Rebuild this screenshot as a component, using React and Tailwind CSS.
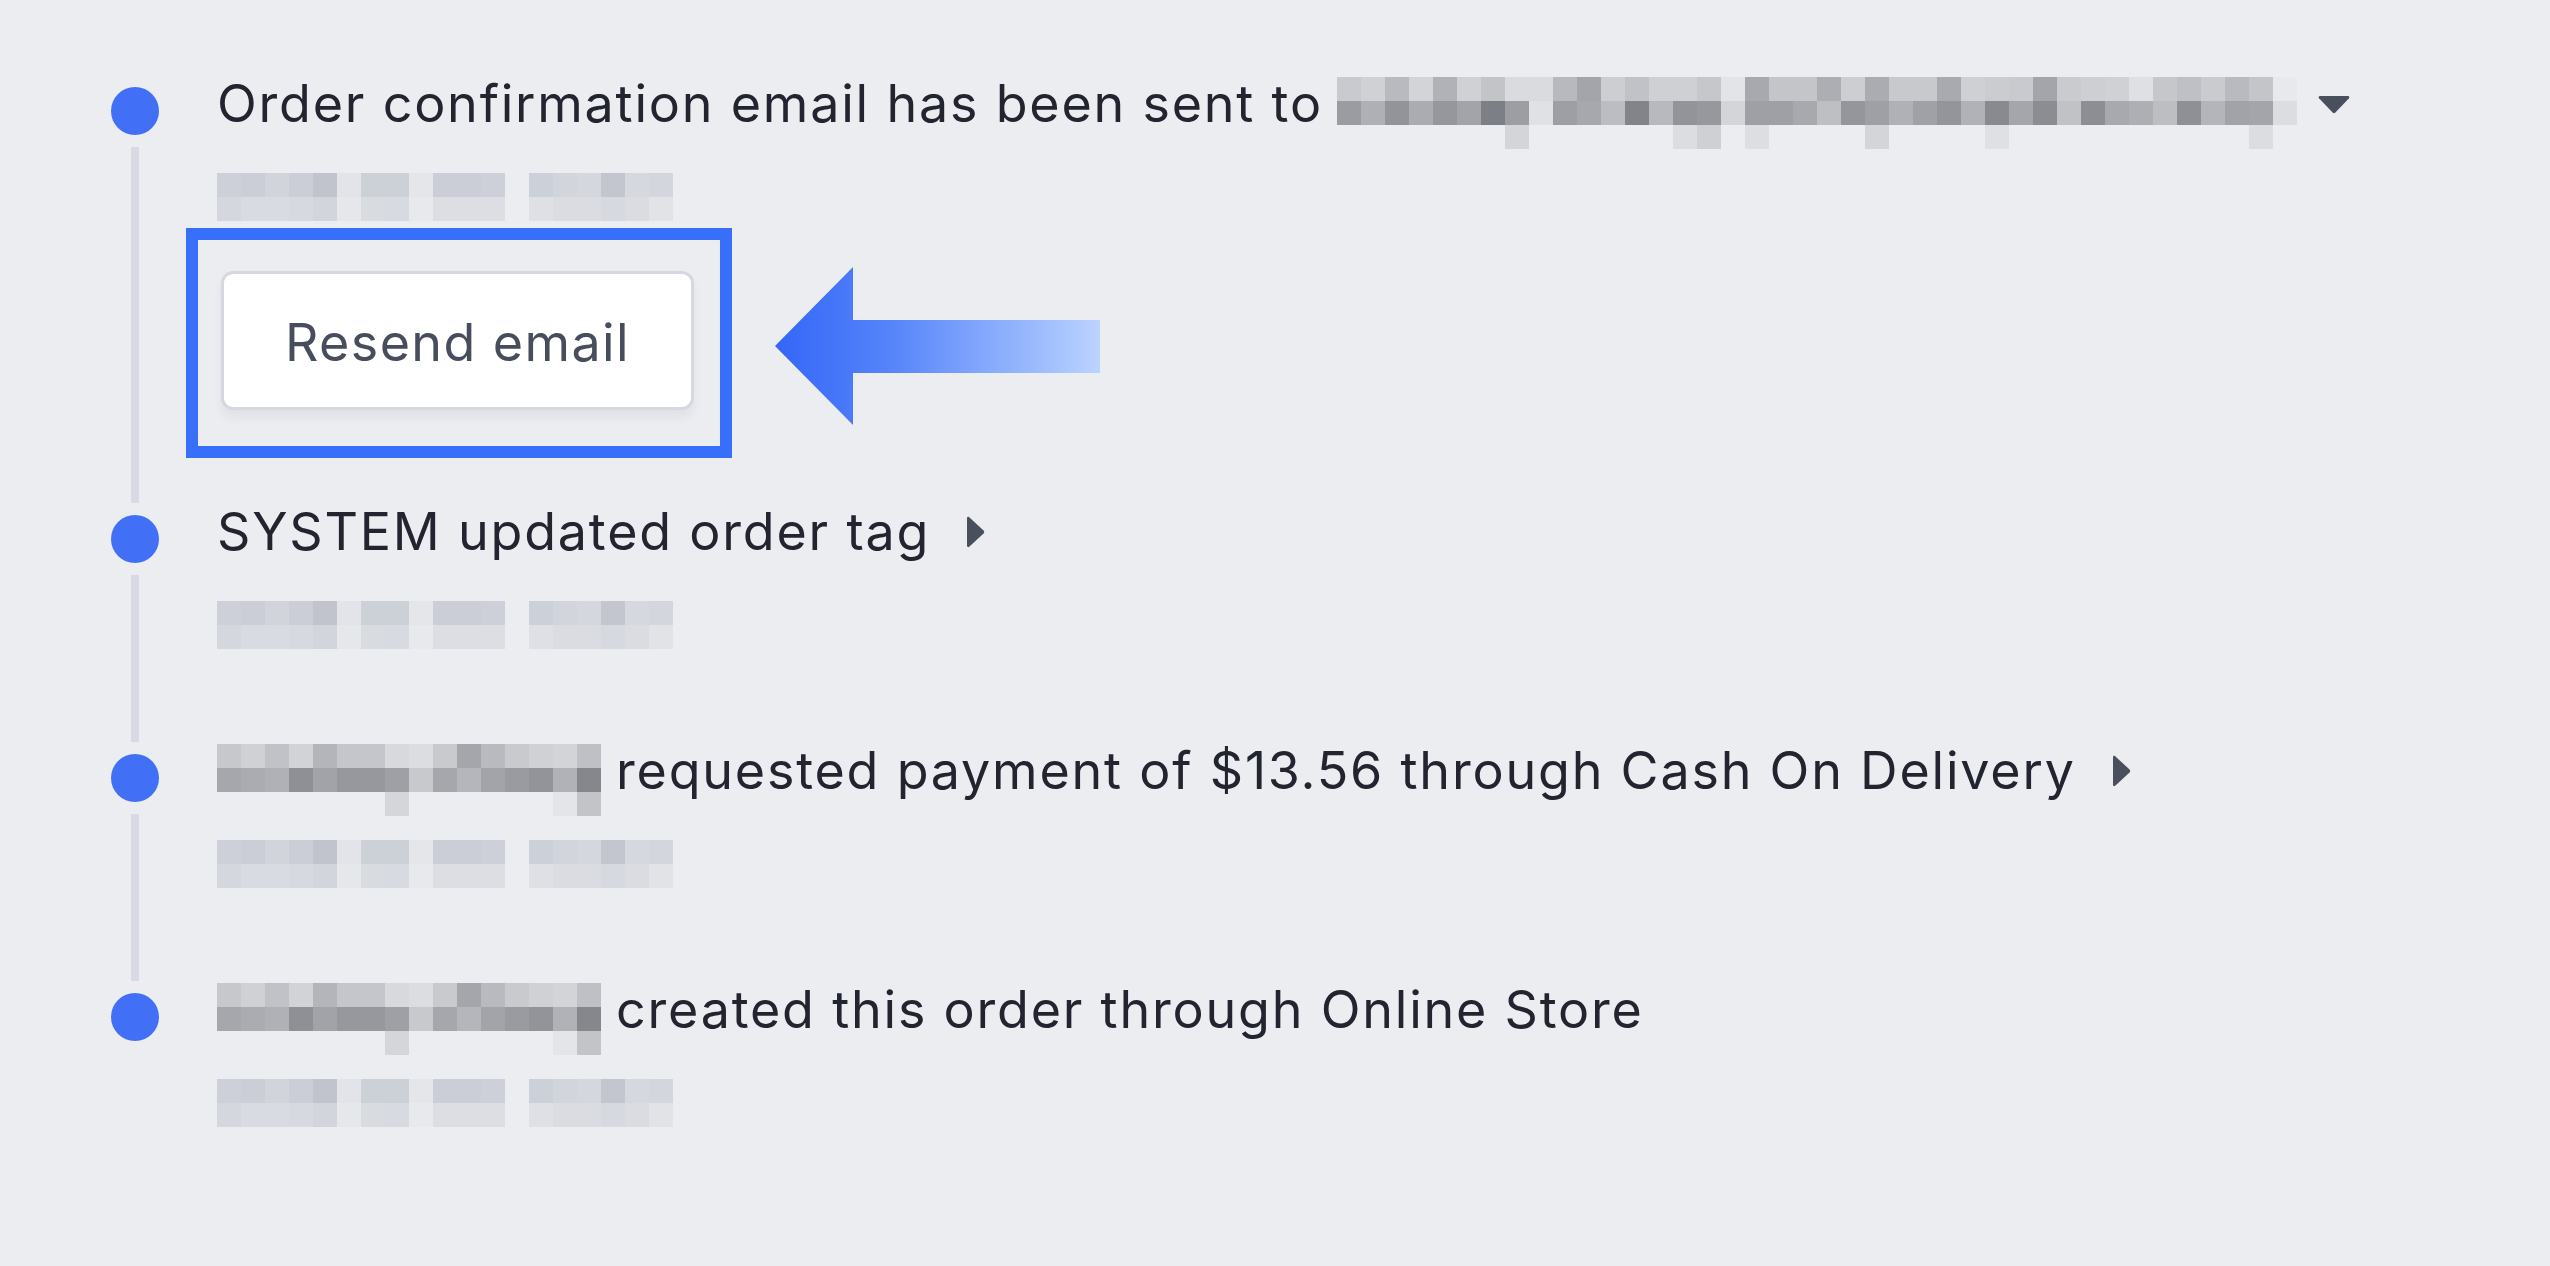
import { Fragment } from 'react'

// pixelated (redacted) blocks, colours read off the reference
const stampTop = ['#cdd0d8', '#cbced6', '#d1d4db', '#cbced6', '#c1c4cd', '#e2e4e9', '#ccd0d7', '#ccd0d7', '#e4e6ea', '#cbced6', '#cbced6', '#cdd0d8', null, '#ccd0d8', '#d2d5dc', '#d4d7dd', '#c3c6cf', '#d5d8de', '#d3d6dc']
const stampBottom = ['#d4d7dd', '#d8dbe1', '#d8dbe1', '#d6d9df', '#d2d5db', '#e6e7eb', '#d8dbe0', '#d7dae0', '#e8e9ec', '#dcdee3', '#dcdee3', '#dcdee3', null, '#dee0e5', '#dadce2', '#dadce2', '#d6d9df', '#dadce1', '#e2e3e7']

const nameTop = ['#c6c8cc', '#d0d1d5', '#c1c2c7', '#d2d3d7', '#b4b5ba', '#c5c6cb', '#c5c6cb', '#d8d9dd', '#dcdde1', '#c9cace', '#a5a6ab', '#b9babf', '#c9cace', '#d0d1d5', '#d3d4d8', '#bfc0c5']
const nameMid = ['#a6a7ad', '#abacb2', '#b0b1b6', '#8e9096', '#a2a3a9', '#97989e', '#97989e', '#9fa0a6', '#c8c9cd', '#a6a7ad', '#b5b6bb', '#a3a4a9', '#9a9ba1', '#93949a', '#b1b2b7', '#86878d']
const nameLow = [null, null, null, null, null, null, null, '#d4d6da', null, null, null, null, null, null, '#e4e5e8', '#c3c4c8']

const emailTop = ['#c9cacf', '#d0d1d5', '#b9babf', '#d3d4d8', '#b1b2b7', '#d0d1d5', '#c3c4c8', '#dadbde', '#dadbdf', '#b8b9be', '#a4a5aa', '#cdced2', '#c1c2c7', '#cfd0d4', '#cfd0d4', '#c6c7cb', '#e3e4e7', '#a8a9ae', '#c4c5c9', '#c4c5c9', '#adaeb3', '#cdced2', '#abacb1', '#c8c9cd', '#c8c9cd', '#a9aaaf', '#cfd0d4', '#cbccd0', '#c9cacf', '#a4a5ab', '#cacbcf', '#cecfd3', '#d0d1d5', '#dfe0e3', '#c6c7cb', '#bfc0c5', '#cacbcf', '#b9babf', '#c4c5c9', '#e8e9ec']
const emailMid = ['#9b9ca1', '#afb0b5', '#93949a', '#abacb1', '#96979d', '#a3a4a9', '#7d7f86', '#9d9ea4', '#e0e1e4', '#9e9fa4', '#a7a8ad', '#bcbdc2', '#82848a', '#b8b9be', '#93949a', '#97989d', '#d4d5d9', '#9fa0a6', '#9fa0a6', '#a8a9ae', '#bebfc3', '#95969c', '#9fa0a5', '#b0b1b6', '#a0a1a7', '#94959b', '#b1b2b7', '#898a90', '#a5a6ab', '#8c8d93', '#c1c2c6', '#8d8e94', '#a8a9ae', '#aeafb4', '#bdbec2', '#8f9096', '#b4b5ba', '#a2a3a8', '#a4a5aa', '#dcdde0']
const emailLow = emailTop.map((_, i) => ({ 7: '#d3d5d9', 14: '#dcdde1', 15: '#cfd0d4', 17: '#dddee2', 22: '#d4d5d9', 27: '#dfe0e3', 38: '#dcdde1' })[i] || null)

function Mosaic({ rows, className = '' }) {
  return (
    <div className={`flex shrink-0 flex-col ${className}`}>
      {rows.map((row, r) => (
        <div key={r} className="flex">
          {row.map((c, i) => (
            <span key={i} className="h-[24px] w-[24px]" style={{ backgroundColor: c || 'transparent' }} />
          ))}
        </div>
      ))}
    </div>
  )
}

function CaretDown() {
  return (
    <svg width="32" height="20" viewBox="0 0 32 20" className="ml-[21px] shrink-0">
      <path d="M2 2h28c1.2 0 1.8 1.3 1 2.2L17.4 18.6c-.8.8-2 .8-2.8 0L1 4.2C.2 3.3.8 2 2 2z" fill="#4a4f5e" />
    </svg>
  )
}

function CaretRight() {
  return (
    <svg width="19" height="32" viewBox="0 0 19 32" className="ml-[36px] shrink-0">
      <path d="M1 2.2C1 1 2.3.4 3.2 1.2l14.4 13.4c.8.8.8 2 0 2.8L3.2 30.8C2.3 31.6 1 31 1 29.8z" fill="#4a4f5e" />
    </svg>
  )
}

function Row({ title, last, children }) {
  return (
    <li className="flex">
      <div className="flex w-[48px] shrink-0 flex-col items-center pt-[12px]">
        <span className="h-[48px] w-[48px] rounded-full bg-[#4170f6]" />
        {!last && <span className="mt-[12px] w-[8px] flex-1 bg-[#d8d9e3]" />}
      </div>
      <div className="ml-[58px] pb-[93px]">
        <div className="flex h-[58px] items-center whitespace-nowrap text-[52px] leading-[58px] tracking-[1.8px] text-[#22242f]">
          {title}
        </div>
        <Mosaic rows={[stampTop, stampBottom]} className="mt-[40px]" />
        {children}
      </div>
    </li>
  )
}

export default function App() {
  return (
    <div className="min-h-screen bg-[#ecedf1] pl-[111px] pt-[75px] font-['Inter',sans-serif]">
      <ol>
        <Row
          title={
            <Fragment>
              <span>Order confirmation email has been sent to</span>
              <Mosaic rows={[emailTop, emailMid, emailLow]} className="ml-[14px] mt-[2px] h-[58px] self-start" />
              <CaretDown />
            </Fragment>
          }
        >
          <div className="relative ml-[4px] mt-[50px] w-fit">
            <button className="h-[139px] w-[473px] rounded-[12px] border-[3px] border-[#d6d8e1] bg-white pt-[4px] text-[52px] tracking-[1.4px] text-[#474d5c] shadow-[0_8px_10px_rgba(30,40,80,0.05)]">
              Resend email
            </button>
            <div className="pointer-events-none absolute -bottom-[48px] -left-[35px] -right-[38px] -top-[43px] border-[12px] border-[#386ffa]" />
            <svg width="325" height="158" viewBox="0 0 325 158" className="absolute left-[554px] top-[-4px]">
              <defs>
                <linearGradient id="arrowFade" x1="0" y1="0" x2="1" y2="0">
                  <stop offset="0" stopColor="#3366f7" />
                  <stop offset="0.35" stopColor="#5584fa" />
                  <stop offset="1" stopColor="#bbd3ff" />
                </linearGradient>
              </defs>
              <path d="M0 79 L78 0 V53 H325 V106 H78 V158 Z" fill="url(#arrowFade)" />
            </svg>
          </div>
        </Row>
        <Row
          title={
            <Fragment>
              <span>SYSTEM updated order tag</span>
              <CaretRight />
            </Fragment>
          }
        />
        <Row
          title={
            <Fragment>
              <Mosaic rows={[nameTop, nameMid, nameLow]} className="mt-[2px] h-[58px] self-start" />
              <span className="ml-[15px]">requested payment of $13.56 through Cash On Delivery</span>
              <CaretRight />
            </Fragment>
          }
        />
        <Row
          last
          title={
            <Fragment>
              <Mosaic rows={[nameTop, nameMid, nameLow]} className="mt-[2px] h-[58px] self-start" />
              <span className="ml-[15px]">created this order through Online Store</span>
            </Fragment>
          }
        />
      </ol>
    </div>
  )
}
